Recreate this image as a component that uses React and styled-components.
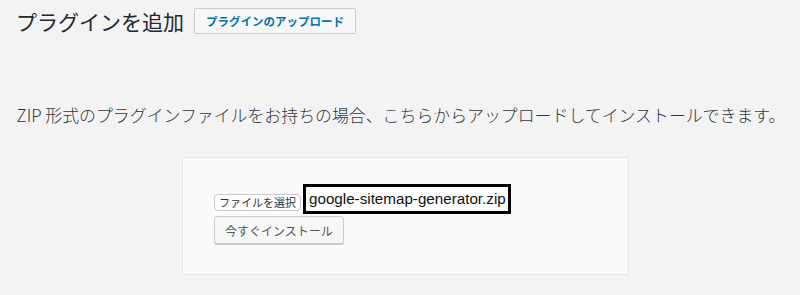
import React from 'react';
import styled, { createGlobalStyle } from 'styled-components';

const GlobalStyle = createGlobalStyle`
  html, body {
    margin: 0;
    padding: 0;
    background: #f3f3f3;
  }
  body {
    font-family: "Noto Sans CJK JP", "Noto Sans", sans-serif;
    color: #23282d;
  }
`;

const Page = styled.div`
  width: 800px;
  height: 295px;
  padding: 8px 0 0 16px;
  box-sizing: border-box;
  overflow: hidden;
`;

const HeaderRow = styled.div`
  display: flex;
  align-items: center;
  gap: 10px;
`;

const Title = styled.h1`
  margin: 0;
  font-size: 21px;
  font-weight: 400;
  line-height: 26px;
  color: #23282d;
`;

const UploadButton = styled.button`
  height: 26px;
  padding: 0 11px;
  font-family: inherit;
  font-size: 11.5px;
  font-weight: 600;
  color: #0073aa;
  background: #f7f7f7;
  border: 1px solid #cccccc;
  border-radius: 2px;
  cursor: pointer;
`;

const Description = styled.p`
  margin: 69px 14px 0 0;
  text-align: center;
  font-size: 16.9px;
  line-height: 24px;
  font-weight: 300;
  color: #32373c;
  white-space: nowrap;
`;

const UploadBox = styled.div`
  width: 447px;
  height: 118px;
  margin: 30px 0 0 166px;
  padding: 26px 0 0 31px;
  box-sizing: border-box;
  background: #fafafa;
  border: 1px solid #e6e6e6;
`;

const FileRow = styled.div`
  display: flex;
  align-items: center;
  gap: 2px;
`;

const ChooseButton = styled.button`
  height: 17px;
  padding: 0 4px;
  font-family: inherit;
  font-size: 11px;
  line-height: 15px;
  color: #333;
  background: #ffffff;
  border: 1px solid #c9c9c9;
  border-radius: 4px;
  margin-top: 7px;
`;

const FileName = styled.span`
  display: inline-block;
  padding: 0 2px 0 3px;
  height: 30px;
  line-height: 24px;
  box-sizing: border-box;
  border: 3px solid #000;
  background: #fff;
  font-family: "Liberation Sans", "Noto Sans", sans-serif;
  font-size: 15.2px;
  color: #111;
`;

const InstallButton = styled.button`
  display: block;
  margin-top: 2px;
  height: 28px;
  padding: 0 10px;
  font-family: inherit;
  font-size: 12px;
  color: #555;
  background: #f7f7f7;
  border: 1px solid #cccccc;
  border-radius: 3px;
  box-shadow: 0 1px 0 #cccccc;
`;

export default function App() {
  return (
    <>
      <GlobalStyle />
      <Page>
        <HeaderRow>
          <Title>プラグインを追加</Title>
          <UploadButton>プラグインのアップロード</UploadButton>
        </HeaderRow>
        <Description>
          ZIP 形式のプラグインファイルをお持ちの場合、こちらからアップロードしてインストールできます。
        </Description>
        <UploadBox>
          <FileRow>
            <ChooseButton>ファイルを選択</ChooseButton>
            <FileName>google-sitemap-generator.zip</FileName>
          </FileRow>
          <InstallButton>今すぐインストール</InstallButton>
        </UploadBox>
      </Page>
    </>
  );
}
